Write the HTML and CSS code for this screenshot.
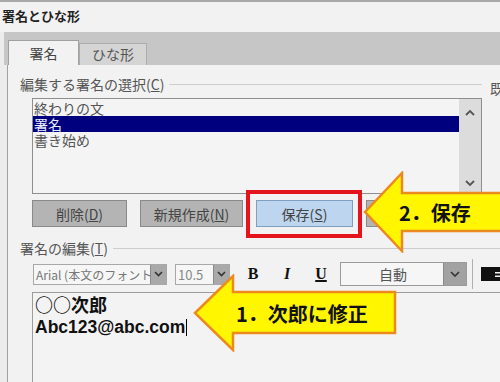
FILE: index.html
```html
<!DOCTYPE html>
<html lang="ja">
<head>
<meta charset="utf-8">
<link rel="stylesheet" href="styles.css">
</head>
<body>
<div class="dialog">
  <div class="titlebar">署名とひな形</div>
  <div class="tabstrip">
    <div class="tab active">署名</div>
    <div class="tab">ひな形</div>
  </div>
  <div class="panel">
    <div class="top">
      <div class="selgroup">
        <div class="legend"><span>編集する署名の選択(<u>C</u>)</span><span class="rule"></span></div>
        <div class="listbox">
          <ul class="items">
            <li>終わりの文</li>
            <li class="sel">署名</li>
            <li>書き始め</li>
          </ul>
          <div class="vscroll">
            <svg width="12" height="8" viewBox="0 0 12 8"><path d="M2 6 L6 2 L10 6" fill="none" stroke="#555" stroke-width="1.8"/></svg>
            <svg width="12" height="8" viewBox="0 0 12 8"><path d="M2 2 L6 6 L10 2" fill="none" stroke="#555" stroke-width="1.8"/></svg>
          </div>
        </div>
        <div class="buttons">
          <button class="btn b1">削除(<u>D</u>)</button>
          <button class="btn b2">新規作成(<u>N</u>)</button>
          <button class="btn b3 save">保存(<u>S</u>)</button>
          <button class="btn b4" aria-label="名前の変更"></button>
        </div>
      </div>
      <div class="rightcol">既定の署名の選択</div>
    </div>
    <div class="editgroup">
      <div class="legend"><span>署名の編集(<u>T</u>)</span><span class="rule"></span></div>
      <div class="toolbar">
        <div class="combo font"><span class="val">Arial (本文のフォント)</span><span class="drop"><svg width="9" height="6" viewBox="0 0 9 6"><path d="M1 1 L4.5 4.5 L8 1" fill="none" stroke="#333" stroke-width="1.6"/></svg></span></div>
        <div class="combo size"><span class="val">10.5</span><span class="drop"><svg width="9" height="6" viewBox="0 0 9 6"><path d="M1 1 L4.5 4.5 L8 1" fill="none" stroke="#333" stroke-width="1.6"/></svg></span></div>
        <span class="fmt bold">B</span>
        <span class="fmt ital">I</span>
        <span class="fmt und">U</span>
        <div class="combo color"><span class="val">自動</span><span class="drop"><svg width="10" height="6" viewBox="0 0 10 6"><path d="M1 1 L5 5 L9 1" fill="none" stroke="#333" stroke-width="1.6"/></svg></span></div>
        <span class="sep"></span>
        <svg class="alignicon" width="22" height="16" viewBox="0 0 22 16"><rect x="0" y="1" width="22" height="14" fill="#111"/><rect x="14" y="6" width="8" height="1.5" fill="#f2f2f2"/><rect x="14" y="9.5" width="8" height="1.5" fill="#f2f2f2"/></svg>
      </div>
      <div class="editor">
        <div class="line jp">○○次郎</div>
        <div class="line">Abc123@abc.com<span class="caret"></span></div>
      </div>
    </div>
  </div>
</div>

<div class="highlight"></div>

<div class="callout c2">
  <svg class="shape" width="140" height="82" viewBox="0 0 140 82"><polygon points="2,41 39,2 39,22 142,22 142,60 39,60 39,80" fill="#fff600" stroke="#ec8a1e" stroke-width="2.5" stroke-linejoin="miter"/></svg>
  <span class="ctext">2．保存</span>
</div>

<div class="callout c1">
  <svg class="shape" width="204" height="78" viewBox="0 0 204 78"><polygon points="2,39 40,2 40,18 202,18 202,59 40,59 40,76" fill="#fff600" stroke="#ec8a1e" stroke-width="2.5" stroke-linejoin="miter"/></svg>
  <span class="ctext">1．次郎に修正</span>
</div>
</body>
</html>
```

FILE: styles.css
```css
html, body {
  margin: 0;
  padding: 0;
}
body {
  width: 500px;
  height: 382px;
  overflow: hidden;
  position: relative;
  background: #ececec;
  font-family: "Noto Sans CJK JP", sans-serif;
  color: #333;
}
u { text-decoration: underline; text-underline-offset: 1px; }

.dialog { width: 720px; }

.titlebar {
  height: 30px;
  line-height: 28px;
  border-top: 2px solid #a8a8a8;
  background: #f2f2f2;
  font-size: 13px;
  font-weight: bold;
  color: #222;
  padding-left: 2px;
}

.tabstrip {
  height: 33px;
  margin-left: 4px;
  padding-left: 4px;
  background: #c6c6c6;
  display: flex;
  align-items: flex-end;
}
.tab {
  width: 66px;
  height: 21px;
  line-height: 21px;
  border: 1px solid #acacac;
  border-bottom: none;
  background: #d5d5d5;
  font-size: 14px;
  text-align: center;
  color: #555;
}
.tab.active {
  width: 69px;
  height: 24px;
  line-height: 24px;
  background: #f2f2f2;
  border-color: #a0a0a0;
  color: #444;
}

.panel {
  margin-left: 7px;
  border-left: 1px solid #a0a0a0;
  background: #f2f2f2;
  height: 317px;
}

.top { display: flex; }
.selgroup {
  width: 474px;
  flex: none;
  box-sizing: border-box;
  padding: 10px 0 0 12px;
}
.legend {
  display: flex;
  align-items: center;
  gap: 5px;
  font-size: 14px;
  line-height: 18px;
  color: #555;
  white-space: nowrap;
}
.legend .rule {
  flex: 1;
  height: 1px;
  background: #cdcdcd;
}

.listbox {
  margin: 5px 0 0 12px;
  width: 450px;
  height: 96px;
  box-sizing: border-box;
  border: 1px solid #8e8e8e;
  background: #f4f4f4;
  display: flex;
}
.items {
  flex: 1;
  list-style: none;
  margin: 0;
  padding: 1px 0 0;
  font-size: 14px;
  color: #555;
}
.items li {
  height: 16px;
  line-height: 16px;
  padding-left: 1px;
  white-space: nowrap;
}
.items li.sel {
  background: #00007e;
  color: #e8eeff;
}
.vscroll {
  width: 22px;
  background: #dcdcdc;
  display: flex;
  flex-direction: column;
  justify-content: space-between;
  align-items: center;
  padding: 10px 0 6px;
  box-sizing: border-box;
}

.buttons {
  display: flex;
  gap: 13px;
  margin: 6px 0 0 12px;
}
.btn {
  height: 27px;
  box-sizing: border-box;
  border: 1px solid #8a8a8a;
  background: #b4b4b4;
  font-family: "Noto Sans CJK JP", sans-serif;
  font-size: 14px;
  color: #444;
  padding: 0;
  white-space: nowrap;
  overflow: hidden;
}
.btn.b1 { width: 95px; }
.btn.b2 { width: 103px; }
.btn.b3 { width: 97px; }
.btn.b4 { width: 95px; }
.btn.save {
  background: #bdd5ee;
  border-color: #7f9fc0;
}

.rightcol {
  margin-left: 8px;
  padding-top: 13px;
  font-size: 14px;
  color: #555;
  white-space: nowrap;
}

.editgroup {
  padding-left: 12px;
  margin-top: 12px;
}

.toolbar {
  display: flex;
  align-items: center;
  height: 24px;
  margin: 5px 0 0 13px;
}
.combo {
  display: flex;
  height: 21px;
  box-sizing: border-box;
  border: 1px solid #a8a8a8;
  background: #f6f6f6;
  flex: none;
}
.combo .val {
  flex: 1;
  overflow: hidden;
  white-space: nowrap;
  font-size: 12px;
  line-height: 19px;
  color: #777;
  padding-left: 2px;
}
.combo .drop {
  width: 15px;
  background: #a9a9a9;
  border-left: 1px solid #8a8a8a;
  display: flex;
  align-items: center;
  justify-content: center;
}
.combo.font { width: 134px; }
.combo.size { width: 55px; margin-left: 8px; }
.combo.size .val { font-size: 13px; color: #888; }
.fmt {
  width: 34px;
  text-align: center;
  font-family: "Liberation Serif", serif;
  font-weight: bold;
  font-size: 16px;
  color: #111;
  flex: none;
}
.fmt.bold { margin-left: 6px; }
.fmt.ital { font-style: italic; }
.fmt.und { text-decoration: underline; text-decoration-thickness: 2px; }
.combo.color {
  width: 127px;
  height: 24px;
  margin-left: 2px;
  border-color: #9a9a9a;
}
.combo.color .val {
  text-align: center;
  font-size: 14px;
  line-height: 22px;
  color: #555;
}
.combo.color .drop {
  width: 22px;
  background: #a2a2a2;
}
.sep {
  width: 1px;
  height: 30px;
  background: #b0b0b0;
  margin-left: 5px;
  flex: none;
}
.alignicon {
  margin-left: 8px;
  flex: none;
}

.editor {
  margin: 6px 0 0 12px;
  height: 100px;
  border-top: 1px solid #9c9c9c;
  border-left: 1px solid #9c9c9c;
  background: #f3f3f3;
  padding: 0 0 0 2px;
  font-family: "Liberation Sans", "Noto Sans CJK JP", sans-serif;
  font-weight: bold;
  font-size: 17.5px;
  color: #111;
}
.editor .line {
  line-height: 23px;
  white-space: nowrap;
}
.editor .jp {
  font-family: "Noto Sans CJK JP", sans-serif;
  font-size: 18px;
}
.caret {
  display: inline-block;
  width: 1px;
  height: 17px;
  background: #000;
  margin-left: 1px;
  vertical-align: -3px;
}

.highlight {
  position: absolute;
  left: 246px;
  top: 190px;
  width: 116px;
  height: 48px;
  box-sizing: border-box;
  border: 4px solid #e3141b;
}

.callout {
  position: absolute;
  display: flex;
  align-items: center;
}
.callout .shape {
  position: absolute;
  left: 0;
  top: 0;
}
.callout .ctext {
  position: relative;
  font-family: "Noto Sans CJK JP", sans-serif;
  font-weight: bold;
  font-size: 20px;
  color: #111;
  white-space: nowrap;
}
.c2 {
  left: 363px;
  top: 171px;
  width: 140px;
  height: 82px;
}
.c2 .ctext { margin-left: 36px; }
.c1 {
  left: 193px;
  top: 274px;
  width: 204px;
  height: 78px;
}
.c1 .ctext { margin-left: 43px; }
```
